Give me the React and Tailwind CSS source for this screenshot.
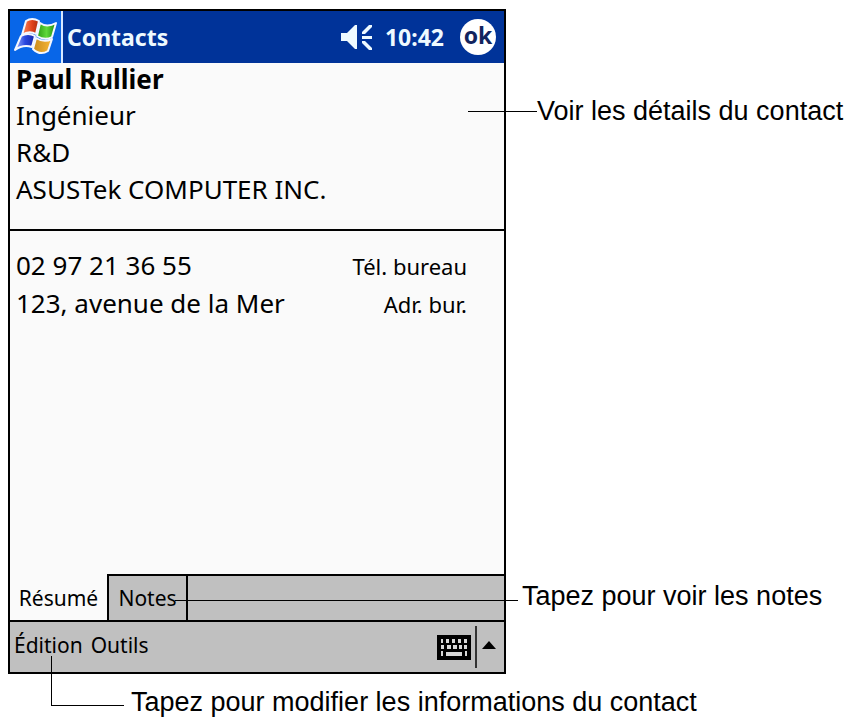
import { useState } from "react";

const lines = ["Ingénieur", "R&D", "ASUSTek COMPUTER INC."];

const rows = [
  { value: "02 97 21 36 55", label: "Tél. bureau" },
  { value: "123, avenue de la Mer", label: "Adr. bur." },
];

function StartLogo() {
  return (
    <svg viewBox="0 0 51 52" className="h-[52px] w-[51px]" aria-hidden="true">
      <defs>
        <linearGradient id="red">
          <stop offset="0" stopColor="#ff8a5c" />
          <stop offset="0.6" stopColor="#e0401a" />
          <stop offset="1" stopColor="#a82c10" />
        </linearGradient>
        <linearGradient id="green">
          <stop offset="0" stopColor="#2a9c14" />
          <stop offset="0.5" stopColor="#5fd83a" />
          <stop offset="1" stopColor="#1c8a10" />
        </linearGradient>
        <linearGradient id="blue">
          <stop offset="0" stopColor="#9fb4ff" />
          <stop offset="0.5" stopColor="#2a48e0" />
          <stop offset="1" stopColor="#1428a8" />
        </linearGradient>
        <linearGradient id="yellow">
          <stop offset="0" stopColor="#c98a1c" />
          <stop offset="1" stopColor="#f8b838" />
        </linearGradient>
      </defs>
      <g stroke="#f4f7ff" strokeWidth="2" strokeLinejoin="round">
        <path d="M16 10 Q22 6 29 10 L26 23 Q19 19 12 24 Z" fill="url(#red)" />
        <path d="M30 12 Q37 17 46 12 L42 26 Q35 30 27 25 Z" fill="url(#green)" />
        <path d="M11 25 Q18 21 25 25 L22 36 Q13 33 5 39 Z" fill="url(#blue)" />
        <path d="M26 27 Q34 32 42 28 L38 40 Q30 45 23 38 Z" fill="url(#yellow)" />
      </g>
    </svg>
  );
}

function SpeakerIcon() {
  return (
    <svg viewBox="0 0 32 28" className="h-7 w-8" fill="#eefaff" aria-hidden="true">
      <path d="M0 10 H6 L14 2 H16 V26 H14 L6 18 H0 Z" />
      <path d="M21 13 H31 V16 H21 Z" />
      <path d="M21 9 L28 2 H31 V4 L24 11 H21 Z" />
      <path d="M21 18 H24 L31 25 V27 H28 L21 20 Z" />
    </svg>
  );
}

function KeyboardIcon() {
  return (
    <svg viewBox="0 0 34 25" className="h-[25px] w-[34px]" aria-hidden="true">
      <rect width="34" height="25" fill="#000" />
      <g fill="#d8d8d8">
        <path d="M4 4h2v4h-2z M9 4h3v4h-3z M15 4h3v4h-3z M21 4h3v4h-3z M27 4h3v4h-3z" />
        <path d="M4 10h3v4h-3z M10 10h4v4h-4z M16 10h4v4h-4z M22 10h3v4h-3z M27 10h3v4h-3z" />
        <path d="M4 16h2v5h-2z M9 17h16v4h-16z M28 16h2v5h-2z" />
      </g>
    </svg>
  );
}

export default function App() {
  const [tab, setTab] = useState("resume");

  return (
    <main className="bg-white pt-[9px] pl-2 font-['Liberation_Sans',Arial,sans-serif] text-[27px] leading-8 text-black">
      <div className="grid grid-cols-[498fr_343fr]">
        <div className="border-2 border-black bg-[#fafafa] font-['Noto_Sans',sans-serif] text-[26px]">
          <header className="flex h-[52px] items-center bg-[#003399] pr-2 font-bold text-[#eefaff]">
            <button aria-label="Démarrer" className="border-r-2 border-[#d8e8ff] bg-[#0866e8]">
              <StartLogo />
            </button>
            <h1 className="ml-1 text-[23px]">Contacts</h1>
            <div className="ml-auto flex items-center gap-3">
              <SpeakerIcon />
              <span className="text-[23px]">10:42</span>
            </div>
            <button className="ml-4 flex size-9 items-center justify-center rounded-full bg-white pb-1 text-[23px] text-[#12245e]">
              ok
            </button>
          </header>

          <section className="relative h-[168px] border-b-2 border-black pl-[6px] leading-[37px]">
            <h2 className="h-[34px] leading-8 font-bold">Paul Rullier</h2>
            {lines.map((line) => (
              <p key={line}>{line}</p>
            ))}
            <div className="absolute top-[30px] left-full -ml-[36px] flex items-center whitespace-nowrap">
              <span className="h-px w-[69px] bg-black" />
              <span className="font-['Liberation_Sans',Arial,sans-serif] text-[27px]">Voir les détails du contact</span>
            </div>
          </section>

          <section className="h-[343px] pt-[16px] pr-[37px] pl-[6px] leading-[37px]">
            {rows.map(({ value, label }) => (
              <div key={label} className="flex items-baseline justify-between">
                <span>{value}</span>
                <span className="text-[22px]">{label}</span>
              </div>
            ))}
          </section>

          <div className="relative flex h-[48px] border-b-2 border-black text-[21px]" role="tablist">
            <button
              role="tab"
              aria-selected={tab === "resume"}
              onClick={() => setTab("resume")}
              className="w-[97px] bg-[#fafafa] pt-[2px]"
            >
              Résumé
            </button>
            <button
              role="tab"
              aria-selected={tab === "notes"}
              onClick={() => setTab("notes")}
              className="w-[81px] border-x-2 border-t-2 border-black bg-[#c0c0c0]"
            >
              Notes
            </button>
            <div className="flex-1 border-t-2 border-black bg-[#c0c0c0]" />
            <div className="absolute top-[6px] left-[165px] flex w-full items-center whitespace-nowrap">
              <span className="mr-1 h-px w-[343px] shrink-0 bg-black" />
              <span className="pb-2 font-['Liberation_Sans',Arial,sans-serif] text-[27px]">Tapez pour voir les notes</span>
            </div>
          </div>

          <footer className="flex h-[50px] items-center bg-[#c0c0c0] pr-2 pl-[4px] text-[21px]">
            <button className="pb-1">Édition</button>
            <button className="ml-2 pb-1">Outils</button>
            <button aria-label="Clavier" className="ml-auto">
              <KeyboardIcon />
            </button>
            <button aria-label="Choix du clavier" className="ml-1 flex h-[42px] items-center border-l-2 border-[#333] pl-[5px]">
              <svg viewBox="0 0 14 8" className="mb-1 h-2 w-[14px]" aria-hidden="true">
                <path d="M7 0 L14 8 H0 Z" fill="#000" />
              </svg>
            </button>
          </footer>
        </div>
      </div>

      <div className="relative flex h-[46px] items-center pt-[10px] pl-[123px]">
        <span className="absolute bottom-[14px] left-[43px] h-[50px] w-[73px] border-b border-l border-black" />
        <span className="whitespace-nowrap">Tapez pour modifier les informations du contact</span>
      </div>
    </main>
  );
}
